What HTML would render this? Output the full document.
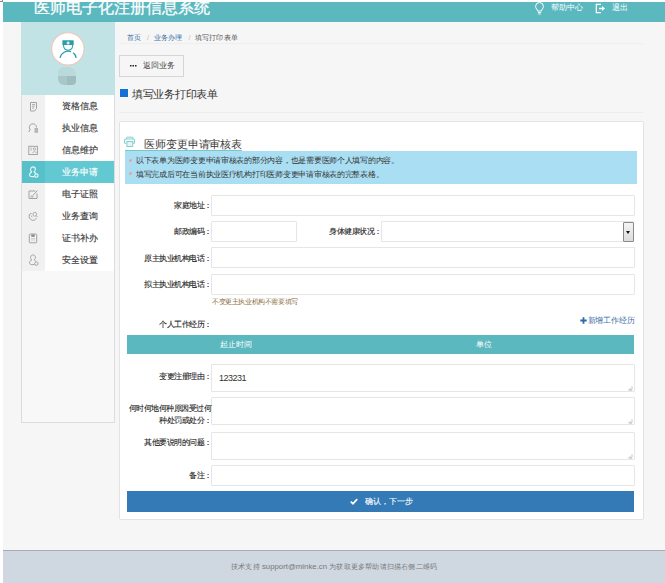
<!DOCTYPE html>
<html><head><meta charset="utf-8">
<style>
*{box-sizing:border-box;margin:0;padding:0}
html,body{width:665px;height:583px;overflow:hidden;background:#fff}
body{font-family:"Liberation Sans",sans-serif;position:relative;color:#333}
.abs{position:absolute}
#bg{left:3px;top:2px;width:662px;height:581px;background:#f6f6f6}
#hdr{left:3px;top:2px;width:662px;height:20px;background:#5bb8bf}
#title{left:34px;top:-2px;font-size:16px;color:#fff;-webkit-text-stroke:0.25px #fff;white-space:nowrap;line-height:20px}
.hl{font-size:8px;color:#fff;white-space:nowrap;line-height:10px}
#side{left:21px;top:22px;width:94px;height:401px;background:#f8f8f8;border:1px solid #dcdcdc;border-top:none}
#prof{left:21px;top:22px;width:94px;height:73px;background:#c2e3e5}
#avatar{left:51px;top:32px;width:33px;height:33px;border-radius:50%;background:#fff;border:1px solid #f1c9bd}
#blob{left:58px;top:67px;width:18px;height:18px;border-radius:6px 8px 4px 6px;overflow:hidden}
.menu{left:22px;width:92px;height:22px}
.menu .ic svg{position:absolute;left:-0.8px;top:0}
.menu .ic{position:absolute;left:0;top:0;width:23px;height:22px;background:#f1f1f1}
.menu .tx{position:absolute;left:23px;top:0;width:69px;height:22px;background:#fff;font-size:9px;color:#3a3a3a;-webkit-text-stroke:0.15px #3a3a3a;text-align:center;line-height:23px;padding-left:0px}
.menu.act .ic{background:#58c0c9}
.menu.act .tx{background:#62c9d3;color:#fff;-webkit-text-stroke:0.15px #fff}
.crumb{left:127px;top:33px;font-size:7px;letter-spacing:0.25px;line-height:10px;color:#999;white-space:nowrap}
.crumb a{color:#3a6fa6;text-decoration:none}
#sep1{left:119px;top:43px;width:524px;height:1px;background:#eeeeee}
#back{left:119px;top:55px;width:65px;height:22px;border:1px solid #d6d6d6;background:#f6f6f6;font-size:7.7px;color:#444;line-height:21px;white-space:nowrap}
#h1sq{left:120px;top:89px;width:8px;height:8px;background:#1570d6}
#h1{left:132px;top:87px;font-size:11px;letter-spacing:-0.3px;line-height:14px;color:#333;white-space:nowrap}
#sep2{left:119px;top:112px;width:524px;height:1px;background:#ececec}
#panel{left:119px;top:121px;width:525px;height:399px;background:#fff;border:1px solid #e3e3e3;border-radius:2px}
#ptitle{left:144px;top:137px;font-size:11px;letter-spacing:-0.1px;line-height:14px;color:#3a3a3a;white-space:nowrap}
#pline{left:125px;top:150px;width:117px;height:1px;background:#78c6cd}
#info{left:125px;top:151px;width:512px;height:33px;background:#aadff3}
.it{font-size:8px;letter-spacing:-0.27px;line-height:10px;color:#333;white-space:nowrap}
.star{font-size:6px;color:#e06666;line-height:10px}
.lbl{z-index:2;margin-top:1px;font-size:8px;letter-spacing:-0.5px;line-height:10px;color:#222;-webkit-text-stroke:0.1px #222;text-align:right;white-space:nowrap}
.inp{background:#fff;border:1px solid #e6e6e6;border-radius:1px}
#thead{left:127px;top:335px;width:507px;height:19px;background:#5bb8bf;color:#fff;font-size:8px;line-height:19px}
#btn{left:127px;top:491px;width:507px;height:21px;background:#337ab7;color:#fff;font-size:8px;line-height:21px;-webkit-text-stroke:0.1px #fff}
#foot{left:3px;top:550px;width:662px;height:33px;background:#cfd7e1;border-top:1px solid #aaacb0}
#ftxt{left:231px;top:562px;font-size:7px;letter-spacing:0.2px;line-height:10px;color:#777;white-space:nowrap}
</style></head><body>
<div class="abs" id="bg"></div>
<div class="abs" style="left:0;top:0;width:3px;height:2px;border-right:1px solid #8a8a8a;border-bottom:1px solid #8a8a8a"></div>
<div class="abs" id="hdr"></div>
<div class="abs" id="title">医师电子化注册信息系统</div>
<svg class="abs" style="left:534px;top:2px" width="11" height="13" viewBox="0 0 11 13"><path d="M3.6,9 C3.6,7.6 1.6,6.6 1.6,4.4 A3.9,3.9 0 0 1 9.4,4.4 C9.4,6.6 7.4,7.6 7.4,9 Z" fill="none" stroke="#fff" stroke-width="1"/><path d="M3.8,10.6 H7.2 M4.4,12 H6.6" stroke="#fff" stroke-width="1"/></svg>
<svg class="abs" style="left:595px;top:3px" width="11" height="11" viewBox="0 0 11 11"><path d="M6,1.3 H1.3 V9.7 H6" fill="none" stroke="#fff" stroke-width="1.2"/><path d="M4,5.5 H7.5" stroke="#fff" stroke-width="1.5"/><path d="M7,3 L10,5.5 L7,8 Z" fill="#fff"/></svg>
<div class="abs hl" style="left:551px;top:3px">帮助中心</div>
<div class="abs hl" style="left:612px;top:3px">退出</div>

<div class="abs" id="side"></div>
<div class="abs" id="prof"></div>
<svg class="abs" style="left:51px;top:32px" width="34" height="34" viewBox="0 0 34 34"><circle cx="16.9" cy="16.9" r="16.2" fill="#fff" stroke="#f0c6b8" stroke-width="1.1"/>
<path d="M11.4,13 V8.8 Q11.4,8.3 11.9,8.3 H22.2 Q22.7,8.3 22.7,8.8 V13 Z" fill="#2b9da7"/>
<path d="M16.5,9.4 h1.2 v1 h1 v1.2 h-1 v1 h-1.2 v-1 h-1 v-1.2 h1 z" fill="#fff"/>
<path d="M12.5,12.8 C12.5,16.6 14.6,18.2 17.1,18.2 C19.6,18.2 21.7,16.6 21.7,12.8" fill="none" stroke="#2b9da7" stroke-width="1.05"/>
<path d="M9,25.8 A8.43,8.43 0 0 1 20.1,19.64 M22.2,20.83 A8.43,8.43 0 0 1 25.2,25.8" fill="none" stroke="#2b9da7" stroke-width="1.3"/></svg>
<div class="abs" id="blob"><div style="position:absolute;left:0;top:0;width:18px;height:9px;background:#b9d9db"></div><div style="position:absolute;left:0;top:9px;width:9px;height:9px;background:#a9c7c9"></div><div style="position:absolute;left:9px;top:9px;width:9px;height:9px;background:#9fbdbf"></div></div>

<div class="abs menu" style="top:95px"><div class="ic"><svg width="23" height="22"><path d="M9.5,7.5 h6 v6 l-2,2.5 h-4 z" fill="none" stroke="#a3a3a3" stroke-width="1"/><path d="M11,9.5 h3 M11,11.2 h3 M11,13 h2" stroke="#a3a3a3" stroke-width="0.8"/></svg></div><div class="tx">资格信息</div></div>
<div class="abs menu" style="top:117px"><div class="ic"><svg width="23" height="22"><path d="M9,12.5 A3.6,3.6 0 1 1 15.5,10.5" fill="none" stroke="#a3a3a3" stroke-width="1"/><path d="M9.2,12.3 L7.8,15" stroke="#a3a3a3" stroke-width="1"/><rect x="13.5" y="11" width="3.5" height="4.8" fill="#b5b5b5"/></svg></div><div class="tx">执业信息</div></div>
<div class="abs menu" style="top:139px"><div class="ic"><svg width="23" height="22"><rect x="7.8" y="7.3" width="8.6" height="8.2" fill="none" stroke="#a3a3a3" stroke-width="1"/><circle cx="13.4" cy="10" r="1.2" fill="none" stroke="#a3a3a3" stroke-width="0.8"/><path d="M11.3,13.8 q2.1,-2.6 4.2,0 M9.3,9.3 h1.6 M9.3,11 h1.6" fill="none" stroke="#a3a3a3" stroke-width="0.8"/></svg></div><div class="tx">信息维护</div></div>
<div class="abs menu act" style="top:161px"><div class="ic"><svg width="23" height="22"><path d="M10.9,10.9 C9.6,10.2 9.4,8.9 9.6,8 C9.9,6.6 11,5.9 12,5.9 C13.2,5.9 14.3,6.8 14.4,8.1 C14.5,9.2 14,10.2 13.1,10.9 C14,11.2 14.6,11.7 15,12.4" fill="none" stroke="#eaf8f9" stroke-width="1.1"/><path d="M10.9,10.9 C8.9,11.6 8.4,13 8.6,14.3 C8.8,15.3 9.8,15.6 11,15.6 H13.6" fill="none" stroke="#eaf8f9" stroke-width="1.1"/><circle cx="15.4" cy="14.6" r="1.7" fill="none" stroke="#eaf8f9" stroke-width="1.1"/></svg></div><div class="tx">业务申请</div></div>
<div class="abs menu" style="top:183px"><div class="ic"><svg width="23" height="22"><path d="M14.5,8 h-6.5 v7.5 h8 v-5" fill="none" stroke="#a3a3a3" stroke-width="1"/><path d="M12,12.3 L16.5,7.5" stroke="#a3a3a3" stroke-width="1"/><rect x="9.5" y="12.5" width="3" height="2" fill="#bbb"/></svg></div><div class="tx">电子证照</div></div>
<div class="abs menu" style="top:205px"><div class="ic"><svg width="23" height="22"><path d="M10.5,8.5 C8,8.2 7.6,11 8.6,13 C9.5,14.8 11.2,15.6 12.8,15.3 C14.3,15 15,14 15.2,13" fill="none" stroke="#a3a3a3" stroke-width="1"/><circle cx="13.8" cy="9.3" r="1.9" fill="none" stroke="#a3a3a3" stroke-width="0.9"/><path d="M15.2,10.7 l1.5,1.5 M10,10.5 l1.2,1.6" stroke="#a3a3a3" stroke-width="0.9"/></svg></div><div class="tx">业务查询</div></div>
<div class="abs menu" style="top:227px"><div class="ic"><svg width="23" height="22"><rect x="8.3" y="7" width="7.4" height="8.8" rx="0.8" fill="none" stroke="#a3a3a3" stroke-width="1"/><rect x="10.3" y="7.5" width="3.4" height="2.3" fill="#888"/><path d="M10,11.5 h4 M10,13 h4" stroke="#c8c8c8" stroke-width="0.8"/></svg></div><div class="tx">证书补办</div></div>
<div class="abs menu" style="top:249px"><div class="ic"><svg width="23" height="22"><path d="M10.9,10.9 C9.6,10.2 9.4,8.9 9.6,8 C9.9,6.6 11,5.9 12,5.9 C13.2,5.9 14.3,6.8 14.4,8.1 C14.5,9.2 14,10.2 13.1,10.9 C14,11.2 14.6,11.7 15,12.4" fill="none" stroke="#a3a3a3" stroke-width="1"/><path d="M10.9,10.9 C8.9,11.6 8.4,13 8.6,14.3 C8.8,15.3 9.8,15.6 11,15.6 H13.6" fill="none" stroke="#a3a3a3" stroke-width="1"/><circle cx="15.4" cy="14.6" r="1.7" fill="none" stroke="#a3a3a3" stroke-width="1"/></svg></div><div class="tx">安全设置</div></div>

<div class="abs crumb"><a>首页</a></div><div class="abs crumb" style="left:147px;color:#bbb">/</div><div class="abs crumb" style="left:153.6px"><a>业务办理</a></div><div class="abs crumb" style="left:188.5px;color:#bbb">/</div><div class="abs crumb" style="left:194.7px;color:#555">填写打印表单</div>
<div class="abs" id="sep1"></div>
<div class="abs" id="back"><svg style="position:absolute;left:10px;top:8.5px" width="7" height="2"><rect x="0" y="0" width="1.5" height="1.5" fill="#222"/><rect x="2.5" y="0" width="1.5" height="1.5" fill="#222"/><rect x="5" y="0" width="1.5" height="1.5" fill="#222"/></svg><span style="position:absolute;left:23px;top:-1px">返回业务</span></div>
<div class="abs" id="h1sq"></div>
<div class="abs" id="h1">填写业务打印表单</div>
<div class="abs" id="sep2"></div>

<div class="abs" id="panel"></div>
<svg class="abs" style="left:123px;top:136px" width="13" height="12" viewBox="0 0 13 12"><path d="M3.5,3 V1.8 Q3.5,1.2 4.1,1.2 H9.4 Q10,1.2 10,1.8 V3" fill="none" stroke="#86cdd3" stroke-width="1"/><path d="M3.3,7.3 H2 Q1.5,7.3 1.5,6.8 V4.6 Q1.5,3 3,3 H10 Q11.5,3 11.5,4.6 V6.8 Q11.5,7.3 11,7.3 H9.8" fill="none" stroke="#86cdd3" stroke-width="1.1"/><rect x="3.9" y="5.5" width="5.8" height="5" fill="#e3f4f5" stroke="#86cdd3" stroke-width="1"/></svg>
<div class="abs" id="ptitle">医师变更申请审核表</div>
<div class="abs" id="pline"></div>
<div class="abs" id="info"></div>
<svg class="abs" style="left:128px;top:158px" width="5" height="5" viewBox="0 0 5 5"><ellipse cx="2.5" cy="2.5" rx="1.6" ry="1.1" transform="rotate(-50 2.5 2.5)" fill="#ee9a9a"/></svg>
<div class="abs it" style="left:136px;top:156px">以下表单为医师变更申请审核表的部分内容，也是需要医师个人填写的内容。</div>
<svg class="abs" style="left:128px;top:171px" width="5" height="5" viewBox="0 0 5 5"><ellipse cx="2.5" cy="2.5" rx="1.6" ry="1.1" transform="rotate(-50 2.5 2.5)" fill="#ee9a9a"/></svg>
<div class="abs it" style="left:136px;top:170px">填写完成后可在当前执业医疗机构打印医师变更申请审核表的完整表格。</div>

<div class="abs lbl" style="right:453.5px;top:200px">家庭地址：</div>
<div class="abs inp" style="left:211px;top:195px;width:424px;height:21px"></div>
<div class="abs lbl" style="right:453.5px;top:226px">邮政编码：</div>
<div class="abs inp" style="left:211px;top:221px;width:86px;height:21px"></div>
<div class="abs lbl" style="right:283.5px;top:226px">身体健康状况：</div>
<div class="abs inp" style="left:381px;top:221px;width:253px;height:21px"></div>
<div class="abs" style="left:623px;top:222px;width:11px;height:20px;border:1px solid #8a8a8a;border-radius:1px;background:linear-gradient(#f4f4f4,#dcdcdc)"><div style="position:absolute;left:2px;top:8px;width:0;height:0;border-left:2.5px solid transparent;border-right:2.5px solid transparent;border-top:3px solid #111"></div></div>
<div class="abs lbl" style="right:453.5px;top:253px">原主执业机构电话：</div>
<div class="abs inp" style="left:211px;top:247px;width:424px;height:21px"></div>
<div class="abs lbl" style="right:453.5px;top:279px">拟主执业机构电话：</div>
<div class="abs inp" style="left:211px;top:274px;width:424px;height:21px"></div>
<div class="abs" style="left:212px;top:297px;font-size:7px;letter-spacing:-0.4px;line-height:10px;color:#8a6d3b;white-space:nowrap">不变更主执业机构不需要填写</div>
<div class="abs lbl" style="right:453.5px;top:319px">个人工作经历：</div>
<svg class="abs" style="left:580px;top:317px" width="7" height="7" viewBox="0 0 7 7"><path d="M3.5,0.3 V6.7 M0.3,3.5 H6.7" stroke="#2f6aa8" stroke-width="1.8"/></svg>
<div class="abs" style="left:587.5px;top:316px;font-size:8px;letter-spacing:-0.1px;line-height:10px;color:#3a6fa6;white-space:nowrap">新增工作经历</div>
<div class="abs" id="thead"><span style="position:absolute;left:93px">起止时间</span><span style="position:absolute;left:349px">单位</span></div>

<div class="abs lbl" style="right:453.5px;top:371px">变更注册理由：</div>
<div class="abs inp" style="left:211px;top:364px;width:424px;height:28px"></div><svg class="abs" style="left:627px;top:385px" width="6" height="6" viewBox="0 0 6 6"><path d="M5,1 V5 H1 M3,3 V5 H5" fill="none" stroke="#b8b8b8" stroke-width="0.7"/></svg>
<div class="abs" style="left:219px;top:373px;font-size:9px;letter-spacing:-0.5px;line-height:10px;color:#333">123231</div>
<div class="abs lbl" style="right:453.7px;top:403px">何时何地何种原因受过何</div>
<div class="abs lbl" style="right:453.5px;top:415px">种处罚或处分：</div>
<div class="abs inp" style="left:211px;top:397px;width:424px;height:28px"></div><svg class="abs" style="left:627px;top:418px" width="6" height="6" viewBox="0 0 6 6"><path d="M5,1 V5 H1 M3,3 V5 H5" fill="none" stroke="#b8b8b8" stroke-width="0.7"/></svg>
<div class="abs lbl" style="right:453.5px;top:437px">其他要说明的问题：</div>
<div class="abs inp" style="left:211px;top:432px;width:424px;height:28px"></div><svg class="abs" style="left:627px;top:453px" width="6" height="6" viewBox="0 0 6 6"><path d="M5,1 V5 H1 M3,3 V5 H5" fill="none" stroke="#b8b8b8" stroke-width="0.7"/></svg>
<div class="abs lbl" style="right:453.5px;top:470px">备注：</div>
<div class="abs inp" style="left:211px;top:465px;width:424px;height:21px"></div>
<div class="abs" id="btn"><svg style="position:absolute;left:223px;top:7px" width="8" height="7" viewBox="0 0 8 7"><path d="M0.8,3.6 L3,5.7 L7.2,1.2" fill="none" stroke="#fff" stroke-width="1.7"/></svg><span style="position:absolute;left:238px">确认，下一步</span></div>

<div class="abs" id="foot"></div>
<div class="abs" id="ftxt">技术支持 <span style="font-size:7.8px;letter-spacing:0">support@minke.cn</span> 为获取更多帮助请扫描右侧二维码</div>
</body></html>
